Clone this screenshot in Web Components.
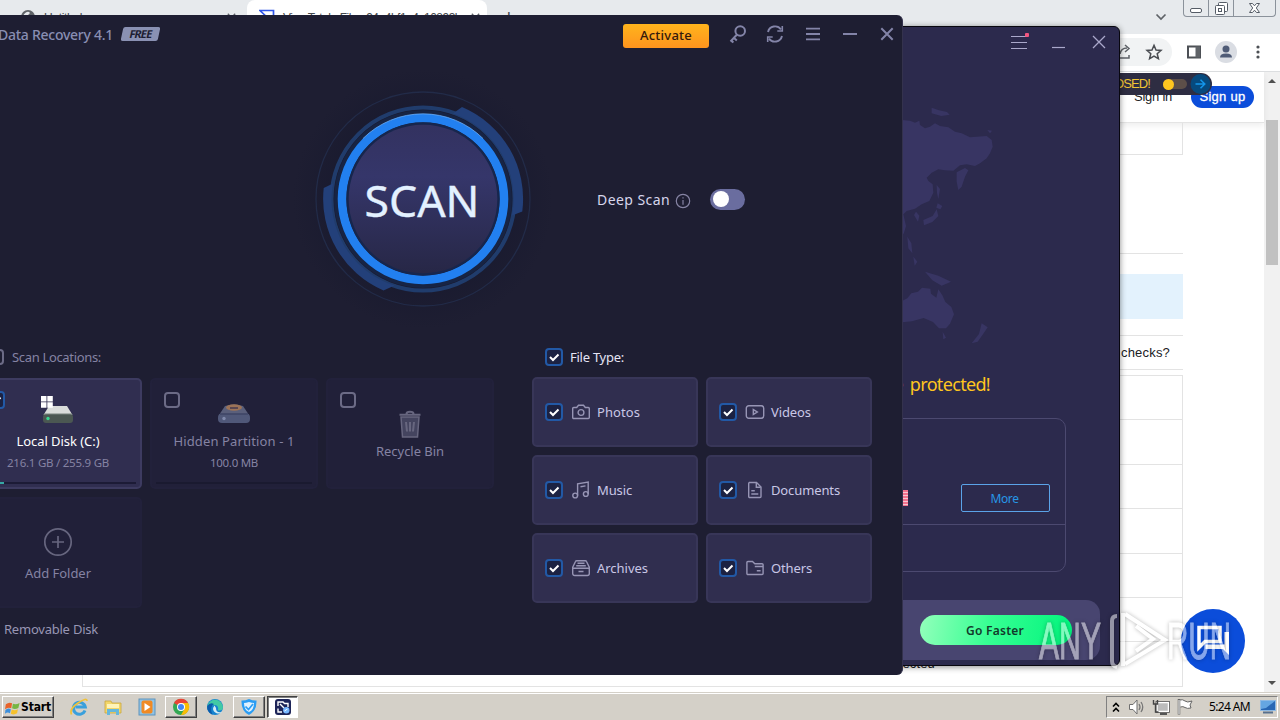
<!DOCTYPE html>
<html lang="en">
<head>
<meta charset="utf-8">
<title>Desktop</title>
<style>
  html, body {
    margin: 0;
    width: 1280px;
    height: 720px;
    overflow: hidden;
    font-family: "Noto Sans", "Open Sans", sans-serif;
    background: #fff;
  }
</style>
</head>
<body>
<desktop-screen></desktop-screen>

<script>
// icon name -> [viewBox width, viewBox height, markup]
const ICONS = {
  key: [20, 20, '<g fill="none" stroke="currentColor" stroke-width="2"><circle cx="12.2" cy="7" r="4.8"/><path d="M9 10.5L2.5 17.5M5.8 13.8l3 2.8M3.2 16.4l2.2 2"/></g>'],
  refresh: [20, 20, '<g fill="none" stroke="currentColor" stroke-width="1.9"><path d="M3 8a7.3 7.3 0 0 1 13-2.6M17 12a7.3 7.3 0 0 1-13 2.6"/><path d="M17.3 2v5h-5M2.7 18v-5h5" stroke-width="1.6"/></g>'],
  menu: [20, 20, '<path d="M3 4.7h14M3 10h14M3 15.3h14" stroke="currentColor" stroke-width="1.8"/>'],
  minimize: [20, 20, '<path d="M3 10h14" stroke="currentColor" stroke-width="2"/>'],
  close: [20, 20, '<path d="M4.3 4.3l11.4 11.4M15.7 4.3L4.3 15.7" stroke="currentColor" stroke-width="2"/>'],
  thinmenu: [20, 20, '<path d="M2 4.5h16M2 10.5h16M2 16.5h16" stroke="currentColor" stroke-width="1.2"/><rect x="16" y="1" width="4" height="4" rx="1" fill="#f2557f"/>'],
  thinmin: [20, 20, '<path d="M3 15.5h13" stroke="currentColor" stroke-width="1.2"/>'],
  thinclose: [20, 20, '<path d="M4 4l12 12M16 4L4 16" stroke="currentColor" stroke-width="1.3"/>'],
  info: [16, 16, '<g fill="none" stroke="currentColor" stroke-width="1.2"><circle cx="8" cy="8" r="6.7"/><path d="M8 7v4.7M8 4.2v1.4"/></g>'],
  photo: [20, 20, '<g fill="none" stroke="currentColor" stroke-width="1.4"><path d="M2.7 5.5h3l1.8-2.2h5l1.8 2.2h3a1 1 0 0 1 1 1v9a1 1 0 0 1-1 1H2.7a1 1 0 0 1-1-1v-9a1 1 0 0 1 1-1z"/><circle cx="10" cy="10.5" r="2.9"/></g>'],
  video: [20, 20, '<g fill="none" stroke="currentColor" stroke-width="1.4"><rect x="1.3" y="3.7" width="17.4" height="12.6" rx="2.5"/><path d="M8.3 7.6v4.8l4-2.4z"/></g>'],
  music: [20, 20, '<g fill="none" stroke="currentColor" stroke-width="1.4"><circle cx="4.2" cy="15.5" r="2.4"/><circle cx="14.8" cy="14" r="2.4"/><path d="M6.6 15.5V3.8L17.2 2v12M9.5 6.7l5-.8"/></g>'],
  document: [20, 20, '<g fill="none" stroke="currentColor" stroke-width="1.4"><path d="M4.2 2.5h7.3L16 7v9.5a1 1 0 0 1-1 1H4.7a1 1 0 0 1-1-1v-13a1 1 0 0 1 .5-1z"/><path d="M11.3 2.7v4.5h4.5M6.3 10.8h3.5M6.3 14h7"/></g>'],
  archive: [20, 20, '<g fill="none" stroke="currentColor" stroke-width="1.4"><path d="M1.7 9.2L4.5 3.5q.3-.8 1.3-.8h8.4q1 0 1.3.8l2.8 5.7v6.3a2 2 0 0 1-2 2H3.7a2 2 0 0 1-2-2zM1.7 10.2h16.600M5.200 7.700h9.600M6.500 5.200h7M7.500 13.500h5"/></g>'],
  folder: [20, 20, '<g fill="none" stroke="currentColor" stroke-width="1.4"><path d="M1.9 15.5v-11a1 1 0 0 1 1-1h4.6l2.3 2.3h7.3a1 1 0 0 1 1 1v8.7a1 1 0 0 1-1 1H2.900a1 1 0 0 1-1-1zM9.800 8.500h8M11.800 12.700h3.800"/></g>'],
  drive: [34, 28, '<path d="M8 10h18l5.5 9h-29z" fill="#d9dcda"/><rect x="2" y="18" width="30" height="9" rx="3" fill="#4b5752"/><path d="M3 18h28" stroke="#77827c"/><circle cx="7" cy="22.5" r="1.7" fill="#37d490"/><path d="M0 0h5.5v5.5H0zM6.3 0h5.5v5.5H6.3zM0 6.3h5.5v5.5H0zM6.3 6.3h5.5v5.5H6.3z" fill="#fff"/>'],
  hidden: [34, 28, '<path d="M8 10q9-3 18 0l6 9H2z" fill="#5a5f7b"/><rect x="1" y="17.5" width="32" height="9.5" rx="4" fill="#505879"/><path d="M3 18h28" stroke="#343b5d"/><ellipse cx="17" cy="11.5" rx="8" ry="3.3" fill="#9b7257"/><path d="M13 12h8" stroke="#4e3f50" stroke-width="1.7"/><circle cx="7" cy="22.5" r="1.7" fill="#808aac"/>'],
  bin: [24, 28, '<g fill="#44445f" stroke="#67667f" stroke-width="1.5"><path d="M3 7h18l-1.5 20h-15z"/><path d="M1.5 4.8h21M8.5 3.8q0-2 3.5-2t3.5 2M8 12l1 9.5M12 12v9.5M16 12l-1 9.5" fill="none" stroke-width="2"/></g>'],
  plus: [30, 30, '<g fill="none" stroke="#67667f" stroke-width="1.7"><circle cx="15" cy="15" r="13.2"/><path d="M15 9v12M9 15h12"/></g>'],
  tick: [16, 16, '<path d="M4 8l3 3 5.5-5.5" fill="none" stroke="#fff" stroke-width="2"/>'],
  globe: [16, 16, '<circle cx="8" cy="8" r="7" fill="#5f6368"/><path d="M3 7q3-5 6-4 2 1-1 3l-2 4z" fill="#e7eaed"/>'],
  vt: [16, 16, '<path d="M1 1.5h13.5V14H1l6.5-6.3z" fill="none" stroke="#2f55e8" stroke-width="1.7"/>'],
  chevron: [16, 16, '<path d="M3.5 5.5L8 10l4.5-4.5" fill="none" stroke="#5f6368" stroke-width="1.7"/>'],
  share: [18, 18, '<path d="M4 7v8h10v-3M5 11q1-6 7-6M10 2l4 3.5L10 9" fill="none" stroke="#5f6368" stroke-width="1.5"/>'],
  star: [18, 18, '<path d="M9 2.3l2 4.700 5 .4-3.800 3.300 1.200 4.900L9 13l-4.400 2.600 1.200-4.900L2 7.400 7 7z" fill="none" stroke="#4a4d52" stroke-width="1.5"/>'],
  panel: [16, 16, '<rect x="2" y="2.5" width="12" height="11" fill="none" stroke="#4c5055" stroke-width="2"/><path d="M9.5 2.5H14v11H9.5z" fill="#5f6368"/>'],
  avatar: [22, 22, '<circle cx="11" cy="11" r="11" fill="#dadde3"/><circle cx="11" cy="8" r="3.5" fill="#4f5b76"/><path d="M5 16.5q0-4 6-4t6 4z" fill="#4f5b76"/>'],
  dots: [16, 16, '<g fill="#4c5055"><circle cx="8" cy="3" r="1.6"/><circle cx="8" cy="8" r="1.6"/><circle cx="8" cy="13" r="1.6"/></g>'],
  wmin: [24, 16, '<rect x="6.5" y="8.5" width="11" height="4" rx="1.5" fill="#fff" stroke="#555c66"/>'],
  wmax: [24, 16, '<g fill="#fff" stroke="#555c66"><rect x="9.5" y="2.5" width="9" height="9" rx="1"/><rect x="6.5" y="5.5" width="9" height="9" rx="1"/><rect x="9.5" y="8.5" width="3" height="3"/></g>'],
  wclose: [41, 16, '<path d="M15.5 3.5h3l2 2.300 2-2.300h3L22.300 8l3.200 4.500h-3l-2-2.300-2 2.300h-3L18.700 8z" fill="#fff" stroke="#555c66"/>'],
  chat: [64, 64, '<circle cx="32" cy="32" r="32" fill="#0b4dda"/><path d="M18 18.5h21v14H24l-6 6z" fill="none" stroke="#fff" stroke-width="3.5"/><path d="M43.5 23H48v23l-6-6H24.5v-4.500h19z" fill="#fff"/>'],
  flag: [18, 18, '<path d="M1 5Q5 2 8.5 4L7.5 10Q4 8 0 11z" fill="#e8632a"/><path d="M9.5 4.5Q13 6 17.5 3.5L16 9.5Q12 12 8.5 10z" fill="#76b643"/><path d="M.5 12q3-3 6.5-1L6 16Q3 14 0 16.5z" fill="#3b8fdc"/><path d="M8 11.5q4 2 7.5-.5L14.5 16q-4 2.500-7.500.5z" fill="#f6c22c"/>'],
  ie: [18, 18, '<path d="M15 12.5a6 6 0 1 1 .3-3.500H5.500" fill="none" stroke="#3aa0dc" stroke-width="3"/><path d="M1.5 16.5Q-1 11 8 5T17 3" fill="none" stroke="#f0c23a" stroke-width="1.7"/>'],
  explorer: [18, 18, '<path d="M1 3h6l1 2h9v10H1z" fill="#f2d66a" stroke="#c9a640" stroke-width=".8"/><path d="M3 6h12v4H3z" fill="#fff3b8"/><path d="M3 17v-6h12v6h-3v-3H6v3z" fill="#65b7dc"/>'],
  player: [18, 18, '<rect x="1" y="1" width="16" height="16" fill="#8fc3e6" stroke="#5f93bb"/><rect x="3.5" y="2.5" width="11" height="13" rx="2" fill="#f08a24"/><path d="M6.5 5v8l6-4z" fill="#fff"/>'],
  chrome: [18, 18, '<circle cx="9" cy="9" r="8" fill="#34a853"/><path d="M9 9L2 5a8 8 0 0 1 14 0z" fill="#ea4335"/><path d="M9 5h7.1A8 8 0 0 1 9 17l4-7z" fill="#fbbc05"/><circle cx="9" cy="9" r="4" fill="#fff"/><circle cx="9" cy="9" r="3" fill="#4285f4"/>'],
  edge: [18, 18, '<circle cx="9" cy="9" r="8" fill="#1683cf"/><path d="M1.5 7A8 8 0 0 1 17 9q0 4-5 3.500 1-5-3-5.500-4 0-7.500 2z" fill="#42c9a4"/><path d="M8.5 7.5Q5 12 10 15q4 1.500 6-1-6 1.500-6-4z" fill="#d4ecf5"/><path d="M1.2 8Q4 4 8 6q-5 3-1.500 10.700A8 8 0 0 1 1.200 8z" fill="#0b5cab"/>'],
  shield: [18, 18, '<path d="M9 1q4 1.7 7.5 1.5Q17 13 9 17 1 13 1.5 2.500 5 2.700 9 1z" fill="#2a9df4"/><path d="M9 4q3 1 5 1 0 7-5 9-5-2-5-9 2 0 5-1z" fill="#dff1ff"/><path d="M5.5 8.5l3 3L13 6" fill="none" stroke="#2a9df4" stroke-width="1.7"/>'],
  recovery: [18, 18, '<rect x="1" y="1" width="16" height="16" rx="3" fill="#1d2458"/><path d="M4 8V4h5l1.5 1.5H14V9M4 10.500V14h4M6 6l4 4" fill="none" stroke="#fff" stroke-width="1.4"/><circle cx="12.3" cy="12.3" r="3.2" fill="#77b7ff"/><path d="M10.5 13l3-2" stroke="#fff"/>'],
  up: [10, 14, '<path d="M2 6.5l3-3 3 3M2 11.5l3-3 3 3" fill="none" stroke="#000" stroke-width="1.6"/>'],
  sound: [18, 18, '<path d="M1.5 6.5H5l4-4.500v14l-4-4.500H1.500z" fill="#fff" stroke="#6f6f6f"/><path d="M11 6q2 3 0 6M13 4q3.500 5 0 10" fill="none" stroke="#777" stroke-width="1.3"/>'],
  network: [18, 18, '<rect x="5" y="4.5" width="11.5" height="9" fill="#bbb" stroke="#fff" stroke-width="1.5"/><rect x="4" y="3.5" width="13.5" height="11" fill="none" stroke="#555" stroke-width=".8"/><path d="M8 16h7" stroke="#555" stroke-width="2"/><path d="M1.5 2v4h4V2M3.5 6v8h3" fill="none" stroke="#444" stroke-width="1.4"/>'],
  action: [18, 18, '<path d="M3 2q4-1 6 1t7 0l-2 4 1 3q-4 1-6-.5T4.500 9" fill="#fff" stroke="#666"/><path d="M3 1v15.5" stroke="#666" stroke-width="2.5"/><path d="M3 2v14" stroke="#fff"/>'],
  show: [16, 14, '<rect x=".5" y=".5" width="15" height="10" fill="#2867b4" stroke="#8eb9e3"/><path d="M1 1h14L6 8 1 9z" fill="#65a6e2"/><path d="M3 12.5h10" stroke="#57708e" stroke-width="2"/>']
};

class UiIcon extends HTMLElement {
  connectedCallback() {
    const [w, h, body] = ICONS[this.getAttribute('name')];
    const width = this.getAttribute('size') || w;
    this.attachShadow({ mode: 'open' }).innerHTML = `
    <style>
      :host { display: block; flex: none; width: ${width}px; }
      svg { display: block; width: 100%; }
    </style>
    <svg viewBox="0 0 ${w} ${h}">${body}</svg>`;
  }
}

// one line of text, tracked so that it fills the width given in "w"
class UiText extends HTMLElement {
  connectedCallback() {
    this.attachShadow({ mode: 'open' }).innerHTML = `
    <style>
      :host { display: block; flex: none; line-height: 20px; width: max-content; }
      span { display: block; width: max-content; white-space: nowrap; }
    </style>
    <span><slot></slot></span>`;
    const wanted = parseFloat(this.getAttribute('w'));
    if (!wanted) return;
    const span = this.shadowRoot.querySelector('span');
    const count = this.textContent.length;
    const spacing = (wanted - span.getBoundingClientRect().width) / count;
    span.style.letterSpacing = spacing.toFixed(3) + 'px';
  }
}

class CheckBox extends HTMLElement {
  connectedCallback() {
    const on = this.hasAttribute('checked');
    this.attachShadow({ mode: 'open' }).innerHTML = `
    <style>
      :host {
        display: block; flex: none; box-sizing: border-box;
        width: ${on ? 18 : 16}px; height: ${on ? 18 : 16}px;
        border: ${on ? '2px solid #2259a6' : '2px solid #6c6b86'};
        border-radius: 4px;
        background: ${on ? '#1c2242' : 'transparent'};
      }
      ui-icon { margin: -1px; }
    </style>
    ${on ? '<ui-icon name="tick"></ui-icon>' : ''}`;
  }
}

class BrowserWindow extends HTMLElement {
  constructor() {
    super();
    this.attachShadow({ mode: 'open' }).innerHTML = `
    <style>
      :host { display: flex; flex-direction: column; height: 692px; overflow: hidden; font-family: "Liberation Sans", Arial, sans-serif; }
      .tabs { display: flex; height: 34px; background: #e7eaed; font-size: 12px; color: #45494d; }
      .tab { display: flex; align-items: center; gap: 8px; box-sizing: border-box; height: 34px; }
      .tab ui-text { padding-top: 2px; }
      .tab1 { width: 247px; padding: 0 9px 0 20px; }
      .tab2 { width: 240px; padding: 0 10px 0 12px; background: #fff; border-radius: 8px 8px 0 0; }
      .tab ui-icon:last-child { margin-left: auto; color: #5f6368; }
      .add { margin: 7px 0 0 16px; font-size: 20px; line-height: 20px; }
      .chev { margin: 9px 14px 0 auto; }
      .frame { display: flex; height: 16px; margin-right: 4px; border: 1px solid #8b929b; border-top: 0; border-radius: 0 0 4px 4px; }
      .frame ui-icon + ui-icon { border-left: 1px solid #8b929b; }
      .bar { display: flex; align-items: center; box-sizing: border-box; height: 38px; background: #fff; border-bottom: 1px solid #dcdee0; padding: 0 14px 1px 0; }
      .omni { display: flex; align-items: center; justify-content: flex-end; gap: 12px; box-sizing: border-box; flex: 1; height: 28px; margin: 0 14px 0 90px; padding-right: 9px; border-radius: 14px; background: #f1f3f4; }
      .bar ui-icon[name=panel] { margin-right: 13px; }
      .bar ui-icon[name=avatar] { margin-right: 13px; }
      .view { display: flex; flex: 1; }
      .page { flex: 1; position: relative; font-size: 13px; color: #202124; }
      .head { display: flex; justify-content: flex-end; align-items: center; gap: 19px; height: 50px; padding-right: 10px; border-bottom: 1px solid #e4e4e4; box-shadow: 0 3px 6px #0001; }
      .signup { display: flex; justify-content: center; width: 63px; height: 22px; border-radius: 11px; background: #0b4dda; color: #fff; }
      .signup ui-text { line-height: 22px; -webkit-text-stroke: .3px #fff; }
      .col { width: 1101px; margin-left: 82px; }
      .box { box-sizing: border-box; border: 1px solid #e3e3e3; }
      .b1 { height: 32px; border-top: 0; }
      .b2 { height: 99px; border-width: 0 0 1px; }
      .note { height: 45px; margin: 20px 0 16px; background: #e3f2fd; }
      .ask { display: flex; align-items: center; justify-content: flex-end; box-sizing: border-box; height: 35px; padding-right: 13px; border-width: 1px 0; }
      .rows { margin-top: 5px; border: 1px solid #e3e3e3; border-bottom: 0; }
      .rows div { box-sizing: border-box; height: 44.4px; border-bottom: 1px solid #e3e3e3; }
      .rows div.hit { padding: 12px 0 0 784px; }
      .scroll { display: flex; flex-direction: column; align-items: center; width: 16px; background: #f1f1f1; }
      .scroll i { border: 4px solid transparent; }
      .scroll i:first-child { border-bottom-color: #505050; border-top: 0; margin-top: 7px; }
      .scroll b { width: 12px; height: 145px; margin-top: 37px; background: #c1c1c1; }
      .scroll i:last-child { border-top-color: #505050; border-bottom: 0; margin: auto 0 7px; }
      .pill { position: absolute; right: 52px; top: 1px; display: flex; align-items: center; box-sizing: border-box; width: 150px; height: 22px; padding-right: 1px; justify-content: flex-end; border-radius: 11px; background: #2e2d42; color: #f0c534; }
      .pill s { display: block; width: 24px; height: 10px; margin: 0 3px 0 13px; border-radius: 5px; background: #5d4f49; }
      .pill s::before { content: ""; display: block; width: 11px; height: 11px; border-radius: 50%; background: #ffc61f; }
      .pill svg { display: block; }
      .chat { position: absolute; right: 19px; bottom: 19px; }
    </style>
    <div class="tabs">
      <div class="tab tab1"><ui-icon name="globe"></ui-icon><ui-text w="38">Untitled</ui-text><ui-icon name="close" size="13"></ui-icon></div>
      <div class="tab tab2"><ui-icon name="vt"></ui-icon><ui-text w="178">VirusTotal - File - 94e4bf1e4c10893b</ui-text><ui-icon name="close" size="13"></ui-icon></div>
      <div class="add">+</div>
      <ui-icon class="chev" name="chevron" size="16"></ui-icon>
      <div class="frame"><ui-icon name="wmin"></ui-icon><ui-icon name="wmax"></ui-icon><ui-icon name="wclose"></ui-icon></div>
    </div>
    <div class="bar">
      <div class="omni"><ui-icon name="share"></ui-icon><ui-icon name="star"></ui-icon></div>
      <ui-icon name="panel"></ui-icon><ui-icon name="avatar"></ui-icon><ui-icon name="dots"></ui-icon>
    </div>
    <div class="view">
      <div class="page">
        <div class="head"><ui-text w="38">Sign in</ui-text><div class="signup"><ui-text w="46">Sign up</ui-text></div></div>
        <div class="col">
          <div class="box b1"></div>
          <div class="box b2"></div>
          <div class="note"></div>
          <div class="box ask"><ui-text w="49">checks?</ui-text></div>
          <div class="rows"><div></div><div></div><div></div><div></div><div></div><div></div><div class="hit"><ui-text w="68">Undetected</ui-text></div></div>
        </div>
        <div class="pill"><ui-text w="36">OSED!</ui-text><s></s><svg width="21" height="20"><circle cx="10.5" cy="10" r="10" fill="#064a7e"/><path d="M5.5 10h9M10.5 5.7l4.3 4.3-4.3 4.3" fill="none" stroke="#1496ea" stroke-width="1.5"/></svg></div>
        <ui-icon class="chat" name="chat"></ui-icon>
      </div>
      <div class="scroll"><i></i><b></b><i></i></div>
    </div>`;
  }
}

class ProtectWindow extends HTMLElement {
  constructor() {
    super();
    this.attachShadow({ mode: 'open' }).innerHTML = `
    <style>
      :host { position: absolute; left: 320px; top: 26px; width: 800px; height: 640px; box-sizing: border-box; display: flex; flex-direction: column; align-items: flex-end; border: 1px solid #08070f; border-radius: 6px; background: #2c2a4d; box-shadow: 0 1px 6px #0007; }
      .map { position: absolute; left: 569px; top: 63px; fill: #383563; }
      .title { display: flex; gap: 20px; height: 20px; padding: 5px 10px 0 0; color: #aaa8cb; }
      h2 { margin: 322px 129px 0 0; font: 18px/20px "Noto Sans", sans-serif; word-spacing: 3px; color: #ffc520; }
      .card { width: 500px; height: 154px; box-sizing: border-box; margin: 24px 53px 0 0; border: 1px solid #4c4970; border-radius: 10px; }
      .row { display: flex; align-items: flex-end; justify-content: flex-end; gap: 53px; box-sizing: border-box; height: 106px; padding: 0 15px 12px; border-bottom: 1px solid #4c4970; }
      .bars { width: 8px; height: 16px; margin-bottom: 6px; background: repeating-linear-gradient(#f3728e 0 2px, #f9c6d2 2px 3px); }
      .more { display: flex; justify-content: center; align-items: center; width: 87px; height: 26px; border: 1px solid #5ba3e8; border-radius: 2px; color: #2797e6; font-size: 12px; }
      .more ui-text, .go ui-text { padding: 2px 2px 0 0; }
      .foot { display: flex; align-items: center; justify-content: flex-end; box-sizing: border-box; width: 640px; height: 60px; margin: 28px 19px 0 0; padding-right: 28px; border-radius: 14px; background: #484570; }
      .go { display: flex; justify-content: center; align-items: center; width: 152px; height: 30px; border-radius: 15px; background: linear-gradient(100deg, #93ffbb, #37ff93 45%, #00f47c); color: #123a2b; font-size: 12px; font-weight: 600; }
    </style>
    <svg class="map" width="130" height="270" viewBox="0 0 390 810">
      <path d="M36 90l24 2 15 6 13-6 2 13 15 10 15-5 15-10 15 8 25 4 20 13 20 5 25 12 20-2 30-2 15 12 3 20-8 20-10 15-20 15-15 8-25-5-20 3-20 16-25-1-20-3-20 10-15 15 5 10 13 10 2 25-12 25-23 10-20 13-25 7-10 10 8 35-6 20-10 18-6 2z"/>
      <path d="M200 247l25-13 10 7-10 19-10 30-10 10-5-25zM125 53l22 8 24 5 8 8-25 4-29-8zM292 120l14 2-6 8zM140 285l10 12-5 30-4-18zM143 340l14 8-6 10-12-5zM100 390l28-12 12-20 5 20-18 18-25 10zM78 365l10 12-4 18-12-20zM52 440l12 20 3 30-12-15zM70 500l12 15-8 12zM105 545l40 12 38 18-28 12-28-16z"/>
      <path d="M36 633l16-8 12-15 20-5 12-12 25 3 2 15 16 12 6-25 12 18 9 20 18 15 8 22-12 28-12 14-21 0-18-19-28-12-35 10-30 3zM158 725l10 18-8 5zM275 700l18 12-12 18-18 25-18 5 22-28z"/>
    </svg>
    <div class="title"><ui-icon name="thinmenu"></ui-icon><ui-icon name="thinmin"></ui-icon><ui-icon name="thinclose"></ui-icon></div>
    <h2><ui-text w="107">be protected!</ui-text></h2>
    <div class="card"><div class="row"><div class="bars"></div><div class="more"><ui-text w="28">More</ui-text></div></div></div>
    <div class="foot"><div class="go"><ui-text w="58">Go Faster</ui-text></div></div>`;
  }
}

class LocationCard extends HTMLElement {
  connectedCallback() {
    const active = this.hasAttribute('active');
    const top = this.getAttribute('top');
    const bar = this.hasAttribute('bar');
    this.attachShadow({ mode: 'open' }).innerHTML = `
    <style>
      :host { display: grid; box-sizing: border-box; width: 168px; height: 111px; border-radius: 5px; background: ${active ? '#302e50' : '#212039'}; border: ${active ? '2px solid #3d3b60' : '2px solid #22213b'}; color: #8583a3; font-size: 13px; }
      check-box { grid-area: 1 / 1; margin: ${active ? '11px' : '12px'}; }
      .body { grid-area: 1 / 1; display: flex; flex-direction: column; align-items: center; padding-top: ${top}px; }
      .bar { width: 156px; height: 2px; margin-top: 9px; background: ${active ? '#1c1b36' : '#1a1a30'}; }
      .bar::before { content: ""; display: block; width: ${active ? 24 : 0}px; height: 2px; background: #36a7a4; }
    </style>
    ${this.hasAttribute('nocheck') ? '' : `<check-box ${active ? 'checked' : ''}></check-box>`}
    <div class="body"><slot></slot>${bar ? '<div class="bar"></div>' : ''}</div>`;
  }
}

class TypeCard extends HTMLElement {
  connectedCallback() {
    this.attachShadow({ mode: 'open' }).innerHTML = `
    <style>
      :host { display: flex; align-items: center; box-sizing: border-box; width: 166px; height: 70px; padding-left: 11px; border: 2px solid #383658; border-radius: 5px; background: #302e4f; color: #c9c7e6; font-size: 13px; }
      ui-icon { margin: 0 6px 0 8px; color: #9795b5; }
    </style>
    <check-box checked></check-box>
    <ui-icon name="${this.getAttribute('icon')}"></ui-icon>
    <slot></slot>`;
  }
}

class ScanButton extends HTMLElement {
  constructor() {
    super();
    this.attachShadow({ mode: 'open' }).innerHTML = `
    <style>
      :host { display: block; flex: none; width: 260px; height: 260px; }
      text { font: 43px "Noto Sans", sans-serif; fill: #e3f1ff; stroke: #e3f1ff; stroke-width: .4; }
    </style>
    <svg width="260" height="260" viewBox="-130 -130 260 260">
      <defs>
        <linearGradient id="disc" x2="0" y2="1"><stop offset="0" stop-color="#333260"/><stop offset=".35" stop-color="#35366a"/><stop offset="1" stop-color="#272746"/></linearGradient>
        <radialGradient id="halo"><stop offset=".6" stop-color="#191a2f"/><stop offset="1" stop-color="#1e1e32"/></radialGradient>
      </defs>
      <circle r="130" fill="url(#halo)"/>
      <circle r="107" fill="none" stroke="#222b48" stroke-width="1.3"/>
      <circle r="91.5" fill="none" stroke="#203c6c" stroke-width="4"/>
      <path d="M39-92A99.7 99.7 0 0 1 99.3 12.5L89 16.5A90 90 0 0 0 30-85.5z" fill="#23407a"/>
      <path d="M-39.5 91.5A99.7 99.7 0 0 1-99.3-11L-90-15.5A90 90 0 0 0-28.5 86.5z" fill="#23407a"/>
      <circle r="89" fill="#172444"/>
      <circle r="81" fill="none" stroke="#2280f0" stroke-width="8.6"/>
      <path d="M-60-60.5A85.3 85.3 0 0 1 60-60.5" fill="none" stroke="#76b1f5" stroke-width=".7"/>
      <circle r="76.5" fill="#17264d"/>
      <circle r="74.3" fill="url(#disc)"/>
      <text x="-1" y="18" text-anchor="middle" textLength="115" lengthAdjust="spacingAndGlyphs">SCAN</text>
    </svg>`;
  }
}

class RecoveryWindow extends HTMLElement {
  constructor() {
    super();
    this.attachShadow({ mode: 'open' }).innerHTML = `
    <style>
      :host { position: absolute; left: -50px; top: 15px; width: 953px; height: 660px; box-sizing: border-box; border-right: 1px solid #34324d; border-radius: 6px; background: #1e1e32; overflow: hidden; }
      .title { display: flex; align-items: center; box-sizing: border-box; height: 38px; padding: 0 5px 0 48px; color: #898eb3; font-size: 14px; }
      .title > ui-text { font-weight: 500; padding-top: 1px; }
      .free { display: flex; justify-content: center; width: 37px; height: 14px; margin-left: 9px; transform: skewX(-12deg); border-radius: 2px; background: #8a91b3; color: #1e1e32; font-size: 11px; }
      .free ui-text { line-height: 14px; font-weight: 700; }
      .act { display: flex; align-items: center; justify-content: center; width: 86px; height: 24px; margin: 4px 19px 0 auto; border-radius: 3px; background: linear-gradient(#ffb41c, #ff941e); color: #33190c; font-size: 13px; }
      .act ui-text { font-weight: 500; padding-bottom: 2px; }
      .tools { display: flex; align-items: center; gap: 17.25px; color: #8384a8; }
      .hero { display: flex; align-items: center; margin: 16px 0 0 343px; color: #d7d6ec; font-size: 14px; }
      .hero > ui-text { margin-left: 44px; padding-top: 2px; }
      .hero > ui-icon { margin: 3px 19px 0 5px; color: #8583a3; }
      .toggle { box-sizing: border-box; width: 35px; height: 21px; padding: 2.5px; border-radius: 11px; background: #6a6d9f; }
      .toggle::before { content: ""; display: block; width: 16px; height: 16px; border-radius: 50%; background: #fff; }
      .cols { display: flex; gap: 38px; margin: 18px 0 0 24px; font-size: 13px; }
      .left { width: 520px; color: #8583a3; }
      .head { display: flex; align-items: center; height: 20px; }
      .left .head { gap: 8px; padding-left: 14px; }
      .right .head { gap: 7px; padding-left: 13px; color: #e5e4f5; }
      .grid { display: grid; gap: 8px; }
      .left .grid { grid-template-columns: repeat(3, 168px); margin: 11px 0; }
      .right .grid { grid-template-columns: repeat(2, 166px); margin-top: 10px; }
      .name { margin-top: 7px; }
      .white { color: #fff; }
      .size { margin-top: 2px; font-size: 11.5px; }
      .rem { padding-left: 30px; color: #9896b4; }
    </style>
    <div class="title">
      <ui-text w="115">Data Recovery 4.1</ui-text>
      <div class="free"><ui-text w="25">FREE</ui-text></div>
      <div class="act"><ui-text w="52">Activate</ui-text></div>
      <div class="tools"><ui-icon name="key"></ui-icon><ui-icon name="refresh"></ui-icon><ui-icon name="menu"></ui-icon><ui-icon name="minimize"></ui-icon><ui-icon name="close"></ui-icon></div>
    </div>
    <div class="hero">
      <scan-button></scan-button>
      <ui-text w="73">Deep Scan</ui-text>
      <ui-icon name="info"></ui-icon>
      <div class="toggle"></div>
    </div>
    <div class="cols">
      <div class="left">
        <div class="head"><check-box></check-box><ui-text w="89">Scan Locations:</ui-text></div>
        <div class="grid">
          <location-card active bar top="16">
            <ui-icon name="drive"></ui-icon>
            <ui-text class="name white" w="83">Local Disk (C:)</ui-text>
            <ui-text class="size" w="102">216.1 GB / 255.9 GB</ui-text>
          </location-card>
          <location-card bar top="16">
            <ui-icon name="hidden"></ui-icon>
            <ui-text class="name" w="121">Hidden Partition - 1</ui-text>
            <ui-text class="size" w="48">100.0 MB</ui-text>
          </location-card>
          <location-card top="30">
            <ui-icon name="bin"></ui-icon>
            <ui-text w="68" style="margin-top: 3px">Recycle Bin</ui-text>
          </location-card>
          <location-card nocheck top="28">
            <ui-icon name="plus"></ui-icon>
            <ui-text w="66" style="margin-top: 6px">Add Folder</ui-text>
          </location-card>
        </div>
        <ui-text class="rem" w="94">Removable Disk</ui-text>
      </div>
      <div class="right">
        <div class="head"><check-box checked></check-box><ui-text w="54">File Type:</ui-text></div>
        <div class="grid">
          <type-card icon="photo"><ui-text w="43">Photos</ui-text></type-card>
          <type-card icon="video"><ui-text w="40">Videos</ui-text></type-card>
          <type-card icon="music"><ui-text w="35">Music</ui-text></type-card>
          <type-card icon="document"><ui-text w="69">Documents</ui-text></type-card>
          <type-card icon="archive"><ui-text w="51">Archives</ui-text></type-card>
          <type-card icon="folder"><ui-text w="41">Others</ui-text></type-card>
        </div>
      </div>
    </div>`;
  }
}

class TaskBar extends HTMLElement {
  constructor() {
    super();
    this.attachShadow({ mode: 'open' }).innerHTML = `
    <style>
      :host { display: flex; align-items: center; box-sizing: border-box; height: 28px; padding: 1px 2px 0; background: #d4d0c8; border-top: 1px solid #d4d0c8; box-shadow: inset 0 1px #fff; color: #000; font-size: 12px; }
      .btn { display: flex; align-items: center; justify-content: center; box-sizing: border-box; width: 32px; height: 22px; border: 1px solid; border-color: #fff #404040 #404040 #fff; box-shadow: inset -1px -1px #808080; }
      .start { width: 52px; gap: 1px; font-weight: 700; margin-right: 16px; font-family: "DejaVu Sans Condensed", "DejaVu Sans", sans-serif; }
      .on { width: 31px; margin-left: 2px; background: #fff; border-color: #404040 #fff #fff #404040; box-shadow: inset 1px 1px #808080; }
      .quick { display: flex; gap: 16px; margin-right: 9px; }
      .tray { display: flex; align-items: center; box-sizing: border-box; width: 172px; height: 22px; margin-left: auto; padding-left: 4px; border: 1px solid; border-color: #808080 #fff #fff #808080; }
    </style>
    <div class="btn start"><ui-icon name="flag" size="15"></ui-icon><ui-text w="30">Start</ui-text></div>
    <div class="quick"><ui-icon name="ie"></ui-icon><ui-icon name="explorer"></ui-icon><ui-icon name="player"></ui-icon></div>
    <div class="btn"><ui-icon name="chrome"></ui-icon></div>
    <ui-icon name="edge" style="margin: 0 9px"></ui-icon>
    <div class="btn"><ui-icon name="shield"></ui-icon></div>
    <div class="btn on"><ui-icon name="recovery"></ui-icon></div>
    <div class="tray">
      <ui-icon name="up"></ui-icon>
      <ui-icon name="sound" style="margin-left: 7px"></ui-icon>
      <ui-icon name="network" style="margin-left: 6px"></ui-icon>
      <ui-icon name="action" style="margin-left: 6px"></ui-icon>
      <ui-text w="41" style="margin-left: 15px">5:24 AM</ui-text>
      <ui-icon name="show" style="margin-left: 10px"></ui-icon>
    </div>`;
  }
}

class WaterMark extends HTMLElement {
  constructor() {
    super();
    this.attachShadow({ mode: 'open' }).innerHTML = `
    <style>
      :host { position: absolute; left: 1036px; top: 606px; opacity: .5; }
      svg { display: block; filter: drop-shadow(0 0 2px #0008); }
      text { font: 52px "Liberation Sans Narrow", "Liberation Sans", sans-serif; fill: #fff; stroke: #fff; stroke-width: 1; }
      path { fill: none; stroke: #fff; stroke-width: 4; }
    </style>
    <svg width="200" height="70">
      <text x="3" y="53" textLength="62" lengthAdjust="spacingAndGlyphs">ANY</text>
      <path d="M81 10q-5 0-5 5v40q0 5 5 6M87 7v53M89 8l40 26-40 24M100 20l17 13-17 12"/>
      <text x="131" y="53" textLength="64" lengthAdjust="spacingAndGlyphs">RUN</text>
    </svg>`;
  }
}

class DesktopScreen extends HTMLElement {
  constructor() {
    super();
    this.attachShadow({ mode: 'open' }).innerHTML = `
    <style>
      :host { display: flex; flex-direction: column; position: relative; width: 1280px; height: 720px; overflow: hidden; }
    </style>
    <browser-window></browser-window>
    <protect-window></protect-window>
    <recovery-window></recovery-window>
    <task-bar></task-bar>
    <water-mark></water-mark>`;
  }
}

customElements.define('ui-icon', UiIcon)
customElements.define('ui-text', UiText)
customElements.define('check-box', CheckBox)
customElements.define('location-card', LocationCard)
customElements.define('type-card', TypeCard)
customElements.define('scan-button', ScanButton)
customElements.define('browser-window', BrowserWindow)
customElements.define('protect-window', ProtectWindow)
customElements.define('recovery-window', RecoveryWindow)
customElements.define('task-bar', TaskBar)
customElements.define('water-mark', WaterMark)
customElements.define('desktop-screen', DesktopScreen)
</script>
</body>
</html>
